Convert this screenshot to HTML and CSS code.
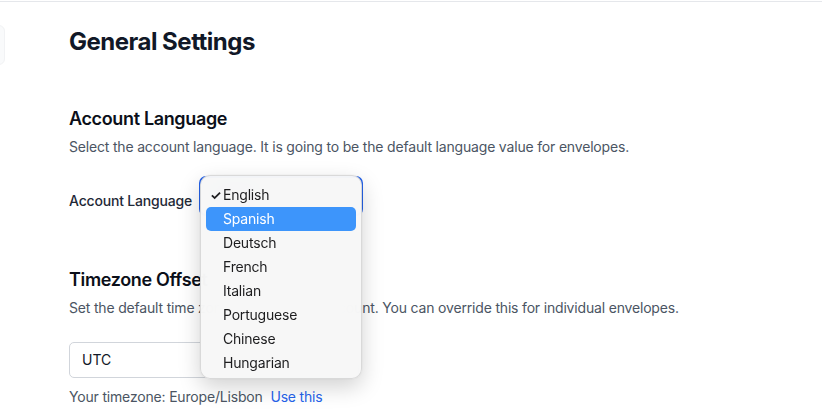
FILE: index.html
```html
<!DOCTYPE html>
<html lang="en">
<head>
<meta charset="utf-8">
<title>General Settings</title>
<link rel="stylesheet" href="styles.css">
</head>
<body>
<div class="topbar"></div>
<div class="layout">
  <aside class="sidebar"><div class="side-item"></div></aside>
  <main class="content">
    <h1 class="page-title">General Settings</h1>

    <section class="section section-lang">
      <h3 class="section-title">Account Language</h3>
      <p class="section-desc">Select the account language. It is going to be the default language value for envelopes.</p>
      <div class="field-row">
        <label class="field-label">Account Language</label>
        <div class="select-wrap">
          <div class="select-box">English</div>
          <ul class="menu">
            <li class="menu-item checked"><span class="check">✓</span>English</li>
            <li class="menu-item active">Spanish</li>
            <li class="menu-item">Deutsch</li>
            <li class="menu-item">French</li>
            <li class="menu-item">Italian</li>
            <li class="menu-item">Portuguese</li>
            <li class="menu-item">Chinese</li>
            <li class="menu-item">Hungarian</li>
          </ul>
        </div>
      </div>
    </section>

    <section class="section section-tz">
      <h3 class="section-title">Timezone Offset</h3>
      <p class="section-desc">Set the default time zone offset for this account. You can override this for individual envelopes.</p>
      <div class="tz-input">UTC</div>
      <p class="tz-hint">Your timezone: Europe/Lisbon <a class="tz-link" href="#">Use this</a></p>
    </section>
  </main>
</div>
</body>
</html>
```

FILE: styles.css
```css
* { box-sizing: border-box; }
html, body { margin: 0; padding: 0; background: #ffffff; }
body {
  font-family: Inter, "Noto Sans", "Liberation Sans", sans-serif;
  color: #111827;
  width: 822px;
  height: 416px;
  overflow: hidden;
}
.topbar {
  height: 2px;
  border-bottom: 1px solid #e5e7eb;
}
.layout {
  display: flex;
}
.sidebar {
  width: 6px;
  overflow: hidden;
  flex: none;
}
.side-item {
  margin-top: 23px;
  margin-left: -20px;
  width: 25px;
  height: 40px;
  background: #f9fafb;
  border: 1px solid #f1f2f4;
  border-radius: 6px;
}
.content {
  padding-left: 63px;
  padding-top: 24px;
  flex: 1;
}
.page-title {
  margin: 0;
  font-size: 24px;
  line-height: 32px;
  font-weight: 700;
  color: #111827;
  letter-spacing: -0.5px;
}
.section-title {
  margin: 0;
  font-size: 18px;
  line-height: 28px;
  font-weight: 600;
  color: #0b0f19;
  letter-spacing: -0.35px;
}
.section-desc {
  margin: 4px 0 0;
  font-size: 14px;
  line-height: 20px;
  color: #4b5563;
  letter-spacing: -0.18px;
}
.section-lang { margin-top: 47px; }
.field-row {
  margin-top: 19px;
  display: flex;
  align-items: center;
}
.field-label {
  width: 130px;
  font-size: 14px;
  line-height: 20px;
  color: #1f2937;
  font-weight: 500;
  padding-top: 10px;
  letter-spacing: -0.18px;
}
.select-wrap {
  position: relative;
}
.select-box {
  width: 164px;
  height: 40px;
  border: 2px solid #2563eb;
  border-radius: 7px;
  font-size: 14px;
  line-height: 36px;
  padding-left: 12px;
  color: #111827;
}
.menu {
  position: absolute;
  top: -1px;
  left: 1px;
  width: 162px;
  margin: 0;
  padding: 7px 5px 3px;
  list-style: none;
  background: rgba(247, 247, 247, 0.96);
  backdrop-filter: blur(12px);
  border: 1px solid rgba(0, 0, 0, 0.12);
  border-radius: 10px;
  box-shadow: 0 8px 22px rgba(0, 0, 0, 0.18), 0 0 2px rgba(0, 0, 0, 0.08);
  z-index: 10;
}
.menu-item {
  position: relative;
  height: 24px;
  line-height: 24px;
  padding-left: 17px;
  font-size: 14px;
  color: #1d1d1f;
  border-radius: 5px;
  letter-spacing: -0.2px;
}
.menu-item.active {
  background: #3d95fb;
  color: #ffffff;
}
.check {
  position: absolute;
  left: 4px;
  top: 0;
  font-size: 13px;
  font-weight: 700;
}
.section-tz { margin-top: 50px; }
.tz-input {
  margin-top: 24px;
  width: 290px;
  height: 36px;
  border: 1px solid #d1d5db;
  border-radius: 5px;
  padding-left: 12px;
  font-size: 14px;
  line-height: 34px;
  color: #111827;
}
.tz-hint {
  margin: 9px 0 0;
  font-size: 14px;
  line-height: 20px;
  color: #4b5563;
  letter-spacing: -0.18px;
}
.tz-link {
  color: #2563eb;
  text-decoration: none;
  margin-left: 4px;
}
```
